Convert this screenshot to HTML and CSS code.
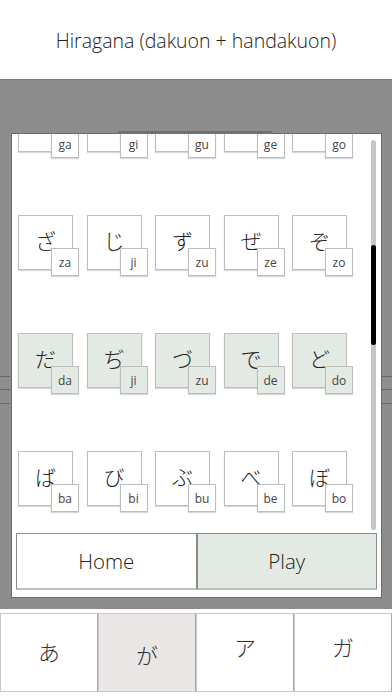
FILE: index.html
```html
<!DOCTYPE html>
<html lang="ja">
<head>
<meta charset="utf-8">
<link rel="stylesheet" href="styles.css">
</head>
<body>
<header class="title">Hiragana (dakuon + handakuon)</header>
<main class="stage">
  <div class="back-tab"></div>
  <div class="side side-left"><span class="zig"></span></div>
  <div class="side side-right"><span class="zig"></span></div>
  <section class="panel">
    <div class="scroll">
      <div class="grid">
        <div class="tile"><span class="kana">が</span><span class="rom">ga</span></div>
        <div class="tile"><span class="kana">ぎ</span><span class="rom">gi</span></div>
        <div class="tile"><span class="kana">ぐ</span><span class="rom">gu</span></div>
        <div class="tile"><span class="kana">げ</span><span class="rom">ge</span></div>
        <div class="tile"><span class="kana">ご</span><span class="rom">go</span></div>

        <div class="tile"><span class="kana">ざ</span><span class="rom">za</span></div>
        <div class="tile"><span class="kana">じ</span><span class="rom">ji</span></div>
        <div class="tile"><span class="kana">ず</span><span class="rom">zu</span></div>
        <div class="tile"><span class="kana">ぜ</span><span class="rom">ze</span></div>
        <div class="tile"><span class="kana">ぞ</span><span class="rom">zo</span></div>

        <div class="tile on"><span class="kana">だ</span><span class="rom">da</span></div>
        <div class="tile on"><span class="kana">ぢ</span><span class="rom">ji</span></div>
        <div class="tile on"><span class="kana">づ</span><span class="rom">zu</span></div>
        <div class="tile on"><span class="kana">で</span><span class="rom">de</span></div>
        <div class="tile on"><span class="kana">ど</span><span class="rom">do</span></div>

        <div class="tile"><span class="kana">ば</span><span class="rom">ba</span></div>
        <div class="tile"><span class="kana">び</span><span class="rom">bi</span></div>
        <div class="tile"><span class="kana">ぶ</span><span class="rom">bu</span></div>
        <div class="tile"><span class="kana">べ</span><span class="rom">be</span></div>
        <div class="tile"><span class="kana">ぼ</span><span class="rom">bo</span></div>

        <div class="tile"><span class="kana">ぱ</span><span class="rom">pa</span></div>
        <div class="tile"><span class="kana">ぴ</span><span class="rom">pi</span></div>
        <div class="tile"><span class="kana">ぷ</span><span class="rom">pu</span></div>
        <div class="tile"><span class="kana">ぺ</span><span class="rom">pe</span></div>
        <div class="tile"><span class="kana">ぽ</span><span class="rom">po</span></div>
      </div>
      <div class="track"><div class="thumb"></div></div>
    </div>
    <div class="actions">
      <button class="btn">Home</button>
      <button class="btn on">Play</button>
    </div>
  </section>
</main>
<nav class="tabs">
  <div class="tab">あ</div>
  <div class="tab sel">が</div>
  <div class="tab up">ア</div>
  <div class="tab up">ガ</div>
</nav>
</body>
</html>
```
FILE: styles.css
```css
* { box-sizing: border-box; }
html, body { margin: 0; padding: 0; }
body {
  width: 392px;
  height: 696px;
  overflow: hidden;
  background: #fff;
  font-family: "Open Sans", "Noto Sans CJK JP", sans-serif;
  color: #2b2b2b;
}
.title {
  height: 79px;
  display: flex;
  align-items: center;
  justify-content: center;
  font-size: 19.5px;
  font-weight: 300;
  color: #222;
  padding-top: 2px;
}
.stage {
  position: relative;
  height: 530px;
  background: #8d8d8d;
  border-top: 1px solid #7a7a7a;
  padding: 53px 10px 11px 11px;
}
.back-tab {
  position: absolute;
  left: 118px;
  top: 51px;
  width: 154px;
  height: 3px;
  background: #717171;
}
.side {
  position: absolute;
  top: 296px;
  width: 10px;
  height: 28px;
  border-top: 1px solid #666;
  border-bottom: 1px solid #666;
}
.side-left { left: 0; }
.side-right { right: 0; }
.zig {
  display: block;
  margin-top: 9px;
  height: 4px;
  border-bottom: 1px solid #666;
}
.panel {
  height: 465px;
  background: #fff;
  border: 1px solid #6a6a6a;
  display: flex;
  flex-direction: column;
}
.scroll {
  position: relative;
  height: 399px;
  overflow: hidden;
}
.grid {
  margin-top: -37px;
  padding-left: 6px;
  display: grid;
  grid-template-columns: repeat(5, 55px);
  column-gap: 13.5px;
  row-gap: 63px;
}
.tile {
  position: relative;
  width: 55px;
  height: 55px;
  border: 1px solid #bdbdbd;
  box-shadow: 0 1px 1px rgba(0,0,0,0.15);
  background: #fff;
  padding: 12px 0 0 16px;
}
.tile.on { background: #e3e9e3; }
.kana {
  display: block;
  font-family: "Noto Sans CJK JP", sans-serif;
  font-weight: 300;
  font-size: 21px;
  line-height: 24px;
  color: #222;
}
.rom {
  position: absolute;
  left: 32px;
  top: 32px;
  width: 28px;
  height: 28px;
  display: flex;
  align-items: center;
  justify-content: center;
  background: #fff;
  border: 1px solid #bdbdbd;
  box-shadow: 0 1px 1px rgba(0,0,0,0.15);
  font-size: 12px;
  color: #444;
}
.tile.on .rom { background: #e3e9e3; }
.track {
  position: absolute;
  left: 359px;
  top: 6px;
  width: 5px;
  height: 390px;
  border-radius: 3px;
  background: #c6c6c6;
}
.thumb {
  margin-top: 105px;
  height: 100px;
  border-radius: 3px;
  background: #000;
}
.actions {
  display: flex;
  padding: 0 4px 0 4px;
  height: 57px;
}
.btn {
  flex: 1;
  margin: 0;
  font-family: "Open Sans", sans-serif;
  font-weight: 300;
  font-size: 20.5px;
  color: #222;
  background: #fff;
  border: 1px solid #8a8a8a;
  border-bottom: 2px solid #bdbdbd;
  padding: 0;
}
.btn.on { background: #e3e9e3; }
.tabs {
  height: 87px;
  padding-top: 4px;
  display: grid;
  grid-template-columns: repeat(4, 1fr);
}
.tab {
  display: flex;
  align-items: center;
  justify-content: center;
  border: 1px solid #c8c8c8;
  border-right: 1px solid #a8a8a8;
  height: 79px;
  font-family: "Noto Sans CJK JP", sans-serif;
  font-weight: 300;
  font-size: 22px;
  color: #333;
  padding-bottom: 4px;
}
.tab.sel { background: #ebe6e6; padding-bottom: 0; padding-top: 2px; }
.tab.up { padding-bottom: 14px; }
```
